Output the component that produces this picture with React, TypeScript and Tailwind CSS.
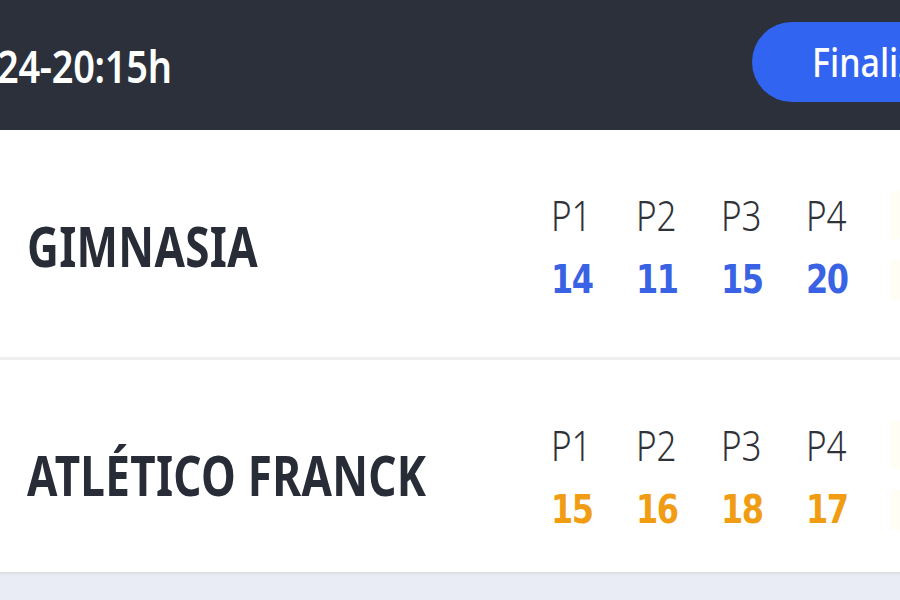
import React from 'react';

type Team = { name: string; scores: number[]; color: string };

const teams: Team[] = [
  { name: 'GIMNASIA', scores: [14, 11, 15, 20], color: 'text-[#3a62e4]' },
  { name: 'ATLÉTICO FRANCK', scores: [15, 16, 18, 17], color: 'text-[#f19d14]' },
];

const TeamRow: React.FC<{ team: Team; tall?: boolean }> = ({ team, tall }) => (
  <div
    className={`flex items-center bg-white ${tall ? 'h-[230px] border-b-[3px] border-[#efeff1] pt-[4px]' : 'h-[212px] pt-[18px]'}`}
  >
    <div className="w-[551px] shrink-0 pl-[27px]">
      <span className="inline-block scale-y-[1.25] text-[44px] font-bold tracking-[0.3px] text-[#272c37]">
        {team.name}
      </span>
    </div>
    <div className="grid shrink-0 grid-cols-[repeat(5,85px)] gap-y-[21px]">
      {['P1', 'P2', 'P3', 'P4'].map((p) => (
        <span key={p} className="inline-block scale-y-[1.2] text-[35px] font-light leading-[48px] text-[#2f3237]">
          {p}
        </span>
      ))}
      <span className="bg-[#fffdf4]" />
      {team.scores.map((s, i) => (
        <span
          key={i}
          className={`inline-block scale-y-[1.2] font-['DejaVu_Sans',sans-serif] text-[32px] font-bold leading-[40px] tracking-[-1.5px] ${team.color}`}
        >
          {s}
        </span>
      ))}
      <span className="bg-[#fffdf4]" />
    </div>
  </div>
);

export default function App() {
  return (
    <div className="h-[600px] w-[900px] overflow-hidden bg-[#e9ecf4] font-['Noto_Sans',sans-serif]">
      <header className="flex h-[130px] items-center bg-[#2b303b]">
        <div className="w-[752px] shrink-0">
          <span className="ml-[-3px] inline-block scale-y-[1.2] text-[38px] font-semibold tracking-[-0.3px] text-white">
            24-20:15h
          </span>
        </div>
        <div className="mb-[6px] flex h-[80px] w-[260px] shrink-0 items-center rounded-full bg-[#3264f2] pl-[60px]">
          <span className="inline-block scale-y-[1.15] text-[34px] font-medium text-white">Finalizado</span>
        </div>
      </header>
      <TeamRow team={teams[0]} tall />
      <TeamRow team={teams[1]} />
      <div className="h-[4px] bg-gradient-to-b from-[#dcdde0] to-[#e9ecf4]" />
    </div>
  );
}
